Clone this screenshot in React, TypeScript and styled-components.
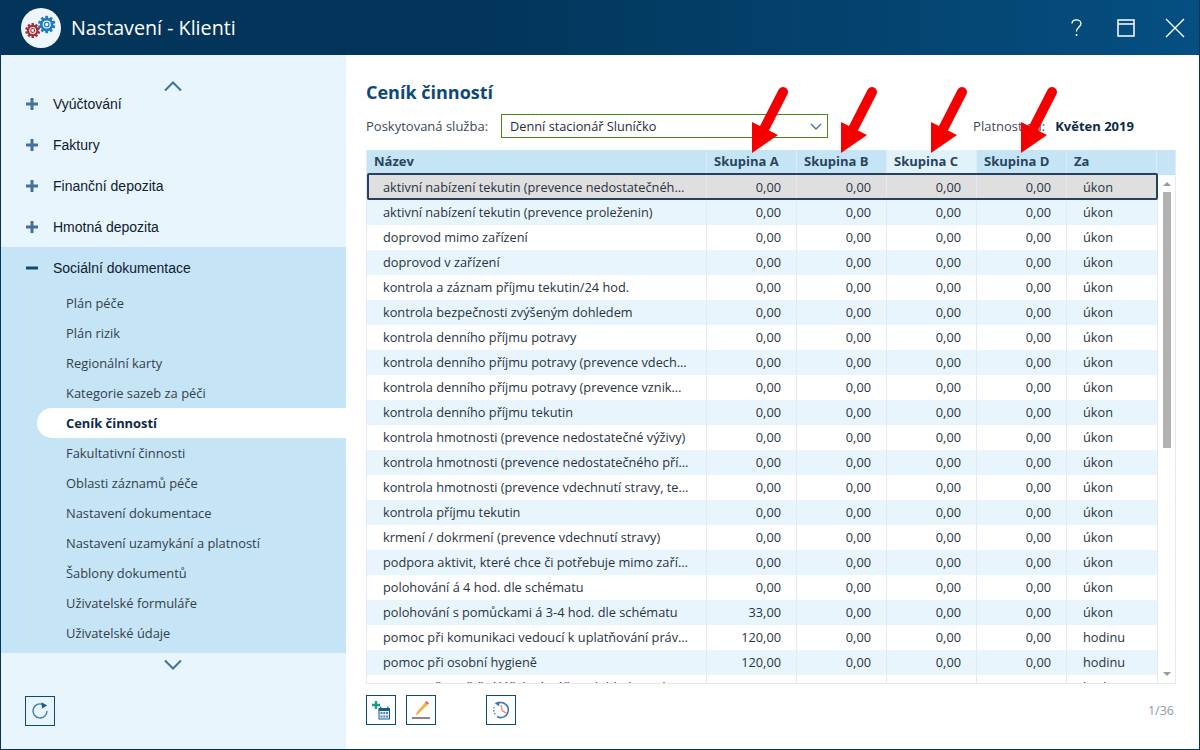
import React from 'react';
import styled, { createGlobalStyle } from 'styled-components';

const Global = createGlobalStyle`
  html, body { margin: 0; padding: 0; background: #fff; }
  * { box-sizing: border-box; }
`;

const Window = styled.div`
  position: relative;
  width: 1200px;
  height: 750px;
  display: flex;
  flex-direction: column;
  border: 1px solid #03355a;
  border-top: 0;
  font-family: "Open Sans", "Liberation Sans", sans-serif;
  overflow: hidden;
`;

const TitleBar = styled.header`
  height: 55px;
  flex: none;
  display: flex;
  align-items: center;
  padding: 0 0 0 20px;
  background: linear-gradient(90deg, #03345a 0%, #03355a 40%, #054f82 100%);
  color: #fff;
`;

const LogoDisc = styled.div`
  width: 40px;
  height: 40px;
  border-radius: 50%;
  background: #eef6fc;
  display: flex;
  align-items: center;
  justify-content: center;
  margin-right: 10px;
`;

const Title = styled.div`
  font-size: 19.7px;
  flex: 1;
`;

const WinButton = styled.div`
  width: 49px;
  height: 40px;
  display: flex;
  align-items: center;
  justify-content: center;
  color: #fff;
`;

const Body = styled.div`
  flex: 1;
  display: flex;
  min-height: 0;
`;

const Sidebar = styled.aside`
  width: 345px;
  flex: none;
  background: #e8f5fc;
  display: flex;
  flex-direction: column;
  padding-top: 24px;
`;

const ScrollArrow = styled.div`
  height: 14px;
  display: flex;
  align-items: center;
  justify-content: center;
  color: #44709c;
  padding-right: 1px;
  position: relative;
  z-index: 1;
`;

const Nav = styled.nav`
  margin-top: -10px;
  height: 570px;
  overflow: hidden;
`;

const Group = styled.div<{ $open?: boolean }>`
  background: ${p => (p.$open ? '#c5e4f5' : 'transparent')};
  padding-bottom: ${p => (p.$open ? '5px' : '0')};
`;

const GroupHead = styled.div`
  height: 41px;
  padding: 1px 0 0 25px;
  display: flex;
  align-items: center;
  font-family: "Liberation Sans", Arial, sans-serif;
  font-size: 14px;
  color: #10202e;
`;

const PlusIcon = styled.span`
  width: 27px;
  display: flex;
  align-items: center;
`;

const SubItem = styled.div<{ $active?: boolean }>`
  height: 30px;
  margin-left: 36px;
  padding-left: 29px;
  display: flex;
  align-items: center;
  font-size: 12.9px;
  color: ${p => (p.$active ? '#0e2a47' : '#333f4c')};
  font-weight: ${p => (p.$active ? 700 : 400)};
  background: ${p => (p.$active ? '#fff' : 'transparent')};
  border-radius: ${p => (p.$active ? '15px 0 0 15px' : '0')};
`;

const SideFooter = styled.div`
  padding: 3px 0 0 24px;
`;

const ScrollArrowBottom = styled(ScrollArrow)`
  margin-top: 5px;
  margin-bottom: 21px;
`;

const IconButton = styled.button`
  width: 30px;
  height: 30px;
  padding: 0;
  border: 1px solid #0b4a78;
  background: transparent;
  display: flex;
  align-items: center;
  justify-content: center;
`;

const Main = styled.main`
  flex: 1;
  min-width: 0;
  background: #fff;
  padding: 25px 23px 0 20px;
  display: flex;
  flex-direction: column;
`;

const Heading = styled.h1`
  margin: 0;
  font-size: 18px;
  line-height: 24px;
  font-weight: 700;
  color: #0d4878;
`;

const FilterRow = styled.div`
  margin-top: 10px;
  height: 24px;
  display: flex;
  align-items: center;
  font-size: 13px;
  color: #3c4a58;
`;

const Select = styled.div`
  width: 327px;
  height: 24px;
  margin-left: 13px;
  border: 1px solid #4a8a14;
  padding: 0 5px 0 8px;
  display: flex;
  align-items: center;
  justify-content: space-between;
  color: #1e2d3c;
  font-size: 12.75px;
`;

const ValidFrom = styled.span`
  margin-left: 145px;
`;

const ValidValue = styled.b`
  margin-left: 10px;
  color: #0e2a47;
`;

const Table = styled.div`
  margin-top: 12px;
  width: 810px;
  height: 534px;
  border: 1px solid #e4e9f8;
  border-top-width: 0;
  position: relative;
  overflow: hidden;
`;

const Columns = '339px 90px 90px 90px 90px 90px';

const HeadRow = styled.div`
  display: grid;
  grid-template-columns: ${Columns} 1fr;
  height: 25px;
  background: #c5e4f5;
`;

const HeadCell = styled.div<{ $hover?: boolean }>`
  display: flex;
  align-items: center;
  padding: 0 0 3px 7px;
  font-size: 13px;
  font-weight: 700;
  color: #28445e;
  border-left: 1px solid #e4e9f8;
  background: ${p => (p.$hover ? '#e2f2fb' : 'transparent')};
  &:first-child { border-left: 0; }
`;

const Rows = styled.div`
  width: 790px;
`;

const Row = styled.div<{ $alt?: boolean; $sel?: boolean }>`
  display: grid;
  grid-template-columns: ${Columns};
  height: 25px;
  background: ${p => (p.$sel ? '#dfdfdf' : p.$alt ? '#e8f5fc' : '#fff')};
  color: #28333f;
  font-size: 12.75px;
`;

const NameCell = styled.div`
  padding: 0 17px 0 16px;
  line-height: 25px;
  white-space: nowrap;
  overflow: hidden;
  text-overflow: ellipsis;
`;

const NumCell = styled.div`
  padding-right: 15px;
  line-height: 25px;
  text-align: right;
  border-left: 1px solid #e4e9f8;
`;

const UnitCell = styled.div`
  padding-left: 16px;
  line-height: 25px;
  border-left: 1px solid #e4e9f8;
`;

const SelectionFrame = styled.div`
  position: absolute;
  left: 0;
  top: 23px;
  width: 791px;
  height: 27px;
  border: 2px solid #24415f;
  border-radius: 2px;
  pointer-events: none;
`;

const ScrollTrack = styled.div`
  position: absolute;
  right: 0;
  top: 25px;
  bottom: 0;
  width: 18px;
  border-left: 1px solid #e4e9f8;
  background: #fff;
`;

const ScrollThumb = styled.div`
  position: absolute;
  left: 5px;
  top: 17px;
  width: 8px;
  height: 256px;
  background: #b2b2b2;
`;

const ScrollUp = styled.div`
  position: absolute;
  left: 5px;
  top: 7px;
  width: 0;
  height: 0;
  border-left: 4px solid transparent;
  border-right: 4px solid transparent;
  border-bottom: 4px solid #9a9a9a;
`;

const ScrollDown = styled.div`
  position: absolute;
  left: 5px;
  bottom: 7px;
  width: 0;
  height: 0;
  border-left: 4px solid transparent;
  border-right: 4px solid transparent;
  border-top: 4px solid #9a9a9a;
`;

const Toolbar = styled.div`
  margin-top: 11px;
  display: flex;
  align-items: center;
  gap: 10px;
`;

const Spacer = styled.div`
  width: 30px;
`;

const Pager = styled.span`
  margin-left: auto;
  margin-right: 2px;
  font-size: 12.5px;
  color: #8f99a5;
`;

const Arrow = styled.svg`
  position: absolute;
  pointer-events: none;
  top: 85px;
  width: 44px;
  height: 72px;
`;

const groups = ['Vyúčtování', 'Faktury', 'Finanční depozita', 'Hmotná depozita'];
const subs = [
  'Plán péče', 'Plán rizik', 'Regionální karty', 'Kategorie sazeb za péči', 'Ceník činností',
  'Fakultativní činnosti', 'Oblasti záznamů péče', 'Nastavení dokumentace',
  'Nastavení uzamykání a platností', 'Šablony dokumentů', 'Uživatelské formuláře', 'Uživatelské údaje',
];

type R = [string, string, string];
const rows: R[] = [
  ['aktivní nabízení tekutin (prevence nedostatečného pitného režimu)', '0,00', 'úkon'],
  ['aktivní nabízení tekutin (prevence proleženin)', '0,00', 'úkon'],
  ['doprovod mimo zařízení', '0,00', 'úkon'],
  ['doprovod v zařízení', '0,00', 'úkon'],
  ['kontrola a záznam příjmu tekutin/24 hod.', '0,00', 'úkon'],
  ['kontrola bezpečnosti zvýšeným dohledem', '0,00', 'úkon'],
  ['kontrola denního příjmu potravy', '0,00', 'úkon'],
  ['kontrola denního příjmu potravy (prevence vdechnutí stravy)', '0,00', 'úkon'],
  ['kontrola denního příjmu potravy (prevence vzniku podvýživy)', '0,00', 'úkon'],
  ['kontrola denního příjmu tekutin', '0,00', 'úkon'],
  ['kontrola hmotnosti (prevence nedostatečné výživy)', '0,00', 'úkon'],
  ['kontrola hmotnosti (prevence nedostatečného příjmu stravy)', '0,00', 'úkon'],
  ['kontrola hmotnosti (prevence vdechnutí stravy, tekutin)', '0,00', 'úkon'],
  ['kontrola příjmu tekutin', '0,00', 'úkon'],
  ['krmení / dokrmení (prevence vdechnutí stravy)', '0,00', 'úkon'],
  ['podpora aktivit, které chce či potřebuje mimo zařízení', '0,00', 'úkon'],
  ['polohování á 4 hod. dle schématu', '0,00', 'úkon'],
  ['polohování s pomůckami á 3-4 hod. dle schématu', '33,00', 'úkon'],
  ['pomoc při komunikaci vedoucí k uplatňování práv a zájmů', '120,00', 'hodinu'],
  ['pomoc při osobní hygieně', '120,00', 'hodinu'],
  ['pomoc při zajištění léčebné péče a dohledu nad užitím', '120,00', 'hodinu'],
];

const gear = (cx: number, cy: number, r: number, color: string) => {
  const teeth = Array.from({ length: 10 }, (_, i) => (i * 360) / 10);
  return (
    <g>
      {teeth.map(a => (
        <rect key={a} x={cx - r * 0.16} y={cy - r} width={r * 0.32} height={r * 0.4} fill={color} transform={`rotate(${a} ${cx} ${cy})`} />
      ))}
      <circle cx={cx} cy={cy} r={r * 0.62} fill="none" stroke={color} strokeWidth={r * 0.3} />
      <circle cx={cx} cy={cy} r={r * 0.26} fill="none" stroke={color} strokeWidth={r * 0.14} />
    </g>
  );
};

const Logo = () => (
  <svg width="36" height="30" viewBox="0 0 36 30">
    {gear(9.7, 17.5, 7.5, '#a92b3a')}
    {gear(23.7, 11.5, 8.7, '#1c7cc0')}
  </svg>
);

const RedArrow = ({ x }: { x: number }) => (
  <Arrow style={{ left: x }} viewBox="0 0 44 72">
    <path d="M37 7 L15 50" stroke="#f50000" strokeWidth="10" strokeLinecap="round" fill="none" />
    <path d="M6 68 L6 37 L32 50 Z" fill="#f50000" />
  </Arrow>
);

const Chevron = ({ up }: { up?: boolean }) => (
  <svg width="20" height="12" viewBox="0 0 20 12">
    <path d={up ? 'M2 10.5 L10 2.5 L18 10.5' : 'M2 1.5 L10 9.5 L18 1.5'} fill="none" stroke="currentColor" strokeWidth="2" />
  </svg>
);

export default function App() {
  return (
    <Window>
      <Global />
      <TitleBar>
        <LogoDisc><Logo /></LogoDisc>
        <Title>Nastavení - Klienti</Title>
        <WinButton>
          <svg width="11" height="18" viewBox="0 0 11 18">
            <path d="M1 4.5 C1 2 3 0.8 5.5 0.8 C8 0.8 10 2.4 10 4.6 C10 8 5.5 8 5.5 12.5" fill="none" stroke="#fff" strokeWidth="1.3" />
            <rect x="4.7" y="15" width="1.6" height="2" fill="#fff" />
          </svg>
        </WinButton>
        <WinButton>
          <svg width="18" height="18" viewBox="0 0 18 18">
            <rect x="1" y="1" width="16" height="16" fill="none" stroke="#fff" strokeWidth="1.5" />
            <path d="M1 5 H17" stroke="#fff" strokeWidth="1.5" />
          </svg>
        </WinButton>
        <WinButton>
          <svg width="20" height="20" viewBox="0 0 20 20">
            <path d="M1 1 L19 19 M19 1 L1 19" stroke="#fff" strokeWidth="1.4" />
          </svg>
        </WinButton>
      </TitleBar>
      <Body>
        <Sidebar>
          <ScrollArrow><Chevron up /></ScrollArrow>
          <Nav>
            {groups.map(g => (
              <GroupHead key={g}>
                <PlusIcon>
                  <svg width="12" height="12" viewBox="0 0 12 12"><path d="M6 0 V12 M0 6 H12" stroke="#44709c" strokeWidth="3" /></svg>
                </PlusIcon>
                {g}
              </GroupHead>
            ))}
            <Group $open>
              <GroupHead>
                <PlusIcon>
                  <svg width="12" height="12" viewBox="0 0 12 12"><path d="M0 6 H12" stroke="#0f4a7c" strokeWidth="3" /></svg>
                </PlusIcon>
                Sociální dokumentace
              </GroupHead>
              {subs.map(s => (
                <SubItem key={s} $active={s === 'Ceník činností'}>{s}</SubItem>
              ))}
            </Group>
          </Nav>
          <ScrollArrowBottom><Chevron /></ScrollArrowBottom>
          <SideFooter>
            <IconButton aria-label="Obnovit">
              <svg width="18" height="18" viewBox="0 0 18 18">
                <path d="M11.5 2.4 A7 7 0 1 0 16 9" fill="none" stroke="#3f7ba8" strokeWidth="1.4" />
                <path d="M10.5 0.3 L16.2 3.4 L11 6.6 Z" fill="#1d5a88" />
              </svg>
            </IconButton>
          </SideFooter>
        </Sidebar>
        <Main>
          <Heading>Ceník činností</Heading>
          <FilterRow>
            Poskytovaná služba:
            <Select>
              Denní stacionář Sluníčko
              <svg width="12" height="7" viewBox="0 0 12 7"><path d="M1 1 L6 6 L11 1" fill="none" stroke="#44709c" strokeWidth="1.4" /></svg>
            </Select>
            <ValidFrom>Platnost od:</ValidFrom>
            <ValidValue>Květen 2019</ValidValue>
          </FilterRow>
          <Table>
            <HeadRow>
              <HeadCell>Název</HeadCell>
              <HeadCell>Skupina A</HeadCell>
              <HeadCell>Skupina B</HeadCell>
              <HeadCell $hover>Skupina C</HeadCell>
              <HeadCell>Skupina D</HeadCell>
              <HeadCell>Za</HeadCell>
              <HeadCell />
            </HeadRow>
            <Rows>
              {rows.map(([name, a, unit], i) => (
                <Row key={name} $alt={i % 2 === 1} $sel={i === 0}>
                  <NameCell>{name}</NameCell>
                  <NumCell>{a}</NumCell>
                  <NumCell>0,00</NumCell>
                  <NumCell>0,00</NumCell>
                  <NumCell>0,00</NumCell>
                  <UnitCell>{unit}</UnitCell>
                </Row>
              ))}
            </Rows>
            <ScrollTrack>
              <ScrollUp />
              <ScrollThumb />
              <ScrollDown />
            </ScrollTrack>
            <SelectionFrame />
          </Table>
          <Toolbar>
            <IconButton aria-label="Přidat">
              <svg width="24" height="24" viewBox="0 0 24 24">
                <path d="M7 3 V11 M3 7 H11" stroke="#12a08a" strokeWidth="2.4" />
                <rect x="9.5" y="10" width="11.5" height="3" fill="#1d5a88" />
                <rect x="11" y="8.6" width="1.2" height="2" fill="#1d5a88" />
                <rect x="18.2" y="8.6" width="1.2" height="2" fill="#1d5a88" />
                <rect x="10" y="12.5" width="10.5" height="8.5" fill="#eaf3fa" stroke="#1d5a88" />
                <path d="M11.5 14 h2 v2 h-2z M14.3 14 h2 v2 h-2z M17.1 14 h2 v2 h-2z M11.5 17.5 h2 v2 h-2z M14.3 17.5 h2 v2 h-2z M17.1 17.5 h2 v2 h-2z" fill="#5585ad" />
              </svg>
            </IconButton>
            <IconButton aria-label="Upravit">
              <svg width="24" height="24" viewBox="0 0 24 24">
                <path d="M17 3.5 L19.5 5.8 L9.5 15.7 L6.8 17.3 L7.8 14 Z" fill="#f4b13e" />
                <path d="M17.6 3 L20 5.2 L18.6 6.6 L16.2 4.4 Z" fill="#e0606a" />
                <rect x="3" y="19" width="18" height="2" fill="#8d8296" />
              </svg>
            </IconButton>
            <Spacer />
            <IconButton aria-label="Historie">
              <svg width="20" height="20" viewBox="0 0 20 20">
                <path d="M6.5 3.3 A7.5 7.5 0 1 1 6 16.5" fill="none" stroke="#3f7ba8" strokeWidth="1.6" />
                <path d="M3.1 7.2 L2.9 8.4 M2.7 10.2 L2.9 11.6 M3.5 13.2 L4.2 14.4" stroke="#3f7ba8" strokeWidth="1.3" />
                <path d="M3.6 3 L8.6 1.2 L8 6.4 Z" fill="#3f7ba8" />
                <path d="M10 5 L11.3 10.7 L15.7 13.3" fill="none" stroke="#ef8a8e" strokeWidth="1.4" />
              </svg>
            </IconButton>
            <Pager>1/36</Pager>
          </Toolbar>
        </Main>
      </Body>
      <RedArrow x={745} />
      <RedArrow x={834} />
      <RedArrow x={924} />
      <RedArrow x={1014} />
    </Window>
  );
}
